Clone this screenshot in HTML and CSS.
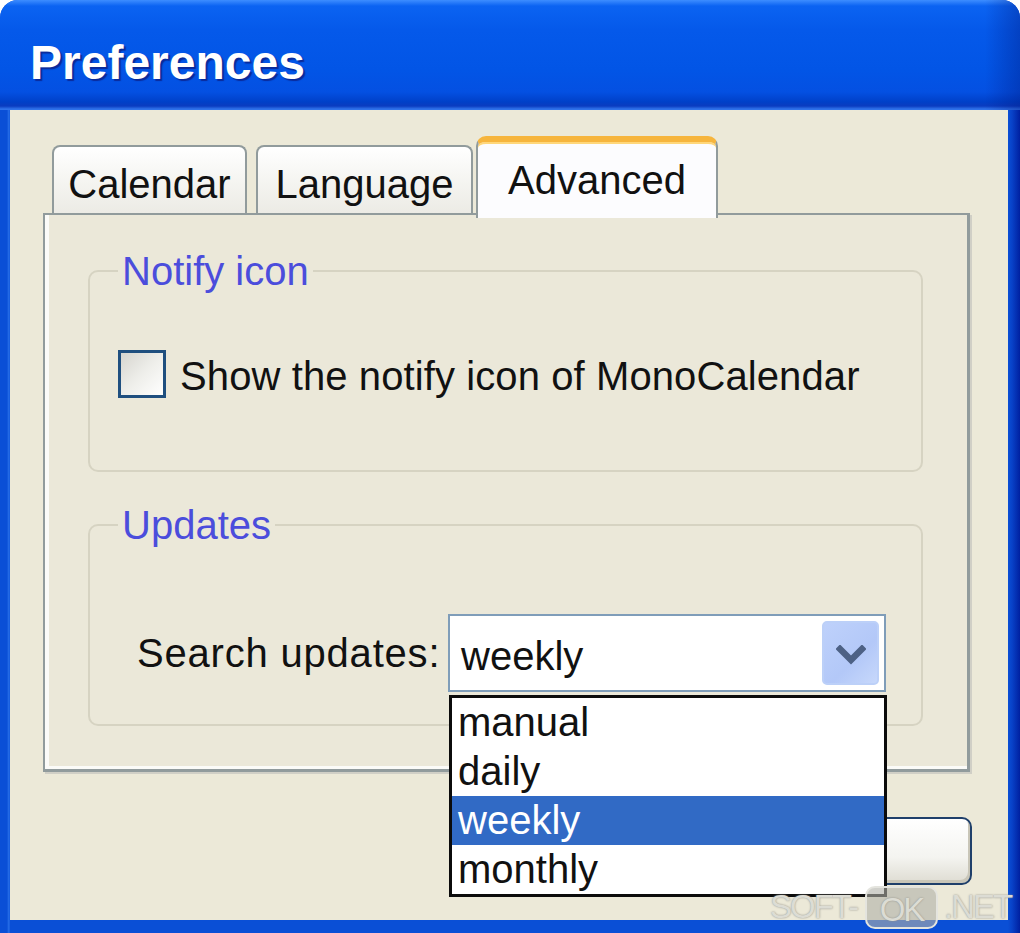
FILE: index.html
```html
<!DOCTYPE html>
<html lang="en">
<head>
<meta charset="utf-8">
<title>Preferences</title>
<link rel="stylesheet" href="styles.css">
</head>
<body>
<div class="window">
  <div class="titlebar">Preferences</div>
  <div class="client">
    <div class="tabs">
      <div class="tab tab-calendar">Calendar</div>
      <div class="tab tab-language">Language</div>
      <div class="tab tab-advanced active">Advanced</div>
    </div>
    <div class="panel">
      <fieldset class="group group-notify">
        <legend>Notify icon</legend>
        <div class="row check-row">
          <span class="checkbox"></span>
          <span class="check-label">Show the notify icon of MonoCalendar</span>
        </div>
      </fieldset>
      <fieldset class="group group-updates">
        <legend>Updates</legend>
        <div class="row combo-row">
          <span class="combo-label">Search updates:</span>
          <div class="combo">
            <span class="combo-value">weekly</span>
            <span class="combo-btn">
              <svg width="30" height="20" viewBox="0 0 30 20"><path d="M4 4 L15 15 L26 4" fill="none" stroke="#4D6185" stroke-width="6.5" stroke-linecap="square"/></svg>
            </span>
            <ul class="dropdown">
              <li>manual</li>
              <li>daily</li>
              <li class="selected">weekly</li>
              <li>monthly</li>
            </ul>
          </div>
        </div>
      </fieldset>
    </div>
    <div class="footer">
      <button class="btn" aria-label="Close"></button>
    </div>
  </div>
  <div class="watermark"><span class="wm-a">SOFT-</span><span class="wm-box">OK</span><span class="wm-c">.NET</span></div>
</div>
</body>
</html>
```

FILE: styles.css
```css
html, body {
  margin: 0;
  padding: 0;
  background: #ffffff;
}

.window {
  position: relative;
  width: 1020px;
  height: 933px;
  box-sizing: border-box;
  display: flex;
  flex-direction: column;
  background: linear-gradient(to right, #0a4fd6 0, #0a4fd6 7px, #2a72ea 9px, #0a4fd6 10px, #0a4fd6 1008px, #0842c8 1012px, #0020a0 1020px);
  border-radius: 18px 18px 0 0;
  overflow: hidden;
  font-family: "Liberation Sans", Arial, sans-serif;
}

.titlebar {
  height: 110px;
  box-sizing: border-box;
  padding: 39px 0 0 30px;
  font-size: 48px;
  line-height: 48px;
  font-weight: bold;
  color: #ffffff;
  text-shadow: 2px 2px 1px #0a2a9a;
  background:
    linear-gradient(to right, rgba(0,0,0,0) 0, rgba(0,0,0,0) 985px, rgba(0,20,120,0.35) 1020px),
    linear-gradient(to bottom, #3d8dff 0, #0b63f2 6px, #0559ea 30px, #0255e6 70px, #0450e2 92px, #0040c8 102px, #0a3cc0 106px, #2f72ea 109px, #2f72ea 110px);
}

.client {
  flex: 1;
  margin: 0 12px 13px 10px;
  background: #ece9d8;
  padding-top: 26px;
  box-sizing: border-box;
  display: flex;
  flex-direction: column;
}

/* Tabs */
.tabs {
  display: flex;
  align-items: flex-end;
  margin-left: 42px;
  height: 82px;
  margin-bottom: -5px;
  position: relative;
  z-index: 2;
}

.tab {
  box-sizing: border-box;
  height: 68px;
  margin-bottom: 5px;
  font-size: 40px;
  line-height: 40px;
  color: #111;
  text-align: center;
  padding-top: 17px;
  border: 2px solid #919b9c;
  border-bottom: 0;
  border-radius: 8px 8px 0 0;
  background: linear-gradient(to bottom, #ffffff 0, #f7f7f4 40%, #ecebe5 100%);
}

.tab-calendar { width: 195px; }
.tab-language { width: 217px; margin-left: 9px; }

.tab.active {
  width: 242px;
  height: 82px;
  margin-left: 3px;
  margin-bottom: 0;
  padding-top: 18px;
  background: #fcfcfe;
  border-top: 6px solid #f6b53d;
  border-color: #f6b53d #919b9c #919b9c #919b9c;
  border-radius: 10px 10px 0 0;
  box-shadow: inset 0 2px 0 #ffd77a;
}

/* Panel */
.panel {
  margin-left: 33px;
  width: 927px;
  height: 559px;
  box-sizing: border-box;
  border: 2px solid #919b9c;
  border-right-width: 3px;
  border-bottom-width: 3px;
  background: #ebe8d9;
  box-shadow: inset 4px -3px 0 #fbfbf8, 2px 2px 0 #d0cfc6;
  padding: 33px 44px 0 43px;
  position: relative;
  z-index: 1;
}

.group {
  margin: 0;
  height: 224px;
  box-sizing: border-box;
  border: 2px solid #d6d3c2;
  border-radius: 10px;
  padding: 0 28px;
  min-width: 0;
}

.group legend {
  font-size: 40px;
  line-height: 46px;
  padding: 0 4px;
  color: #4b4ddc;
}

.group-updates {
  margin-top: 30px;
}

.row {
  display: flex;
  align-items: center;
}

.check-row {
  margin-top: 56px;
  height: 48px;
}

.checkbox {
  width: 48px;
  height: 48px;
  box-sizing: border-box;
  border: 3px solid #1f4f7f;
  background: linear-gradient(135deg, #d6d5cf 0%, #eeeeea 50%, #ffffff 100%);
  flex: none;
}

.check-label {
  margin-left: 14px;
  font-size: 40px;
  line-height: 48px;
  color: #111;
  padding-top: 4px;
  letter-spacing: 0.1px;
}

.combo-row {
  margin-top: 66px;
  height: 78px;
  position: relative;
  z-index: 5;
}

.combo-label {
  margin-left: 19px;
  font-size: 40px;
  line-height: 48px;
  color: #111;
  width: 303px;
  flex: none;
  letter-spacing: 0.8px;
  white-space: nowrap;
}

.combo {
  position: relative;
  margin-left: 8px;
  width: 438px;
  height: 78px;
  box-sizing: border-box;
  border: 2px solid #7f9db9;
  background: #ffffff;
  display: flex;
  align-items: center;
  justify-content: space-between;
  padding: 5px 5px 5px 11px;
}

.combo-value {
  font-size: 40px;
  line-height: 48px;
  color: #111;
  padding-top: 6px;
}

.combo-btn {
  width: 57px;
  height: 64px;
  box-sizing: border-box;
  border: 2px solid #bcd0f8;
  border-radius: 5px;
  background: linear-gradient(135deg, #bed1fb 0%, #b3c8f8 60%, #c7d8fb 100%);
  display: flex;
  align-items: center;
  justify-content: center;
  padding-top: 4px;
}

.dropdown {
  position: absolute;
  left: -1px;
  top: 79px;
  width: 438px;
  height: 202px;
  box-sizing: border-box;
  margin: 0;
  padding: 0;
  list-style: none;
  background: #ffffff;
  border: 3px solid #0b0b0b;
}

.dropdown li {
  height: 49px;
  box-sizing: border-box;
  padding-left: 6px;
  font-size: 40px;
  line-height: 49px;
  color: #111;
}

.dropdown li.selected {
  background: #316ac5;
  color: #ffffff;
}

/* Footer */
.footer {
  display: flex;
  justify-content: flex-end;
  padding-right: 36px;
  margin-top: 45px;
}

.btn {
  width: 200px;
  height: 68px;
  box-sizing: border-box;
  border: 2px solid #1f3f6a;
  border-radius: 10px;
  background: linear-gradient(to bottom, #ffffff 0%, #f4f4f0 60%, #dedcd2 100%);
  box-shadow: inset -2px -3px 0 #c9c6b8;
  padding: 0;
}

/* Watermark */
.watermark {
  position: absolute;
  left: 770px;
  top: 885px;
  display: flex;
  align-items: center;
  height: 44px;
  font-family: "Liberation Sans", Arial, sans-serif;
  font-size: 33px;
  line-height: 44px;
  color: #dcdcd4;
  text-shadow: 0 0 2px #8e8e88;
  letter-spacing: -2px;
  z-index: 10;
}

.wm-a {
  width: 95px;
}

.wm-box {
  box-sizing: border-box;
  width: 73px;
  height: 43px;
  text-align: center;
  border: 2px solid #e4e4de;
  border-radius: 10px;
  background: rgba(176, 176, 168, 0.6);
}

.wm-c {
  margin-left: 6px;
}
```
